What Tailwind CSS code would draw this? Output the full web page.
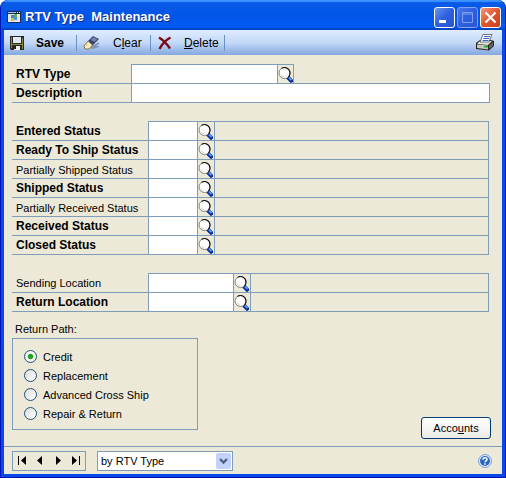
<!DOCTYPE html>
<html lang="en">
<head>
<meta charset="utf-8">
<title>RTV Type Maintenance</title>
<script src="https://cdn.jsdelivr.net/npm/@tailwindcss/browser@4"></script>
</head>
<body class="bg-white font-['Liberation_Sans',Arial,sans-serif] text-[11px] leading-4 text-black">
<svg class="hidden" aria-hidden="true">
  <symbol id="lens" viewBox="0 0 15 17">
    <path d="M10.500 12l2.500 2.500" stroke="#0a2f9c" stroke-width="4" stroke-linecap="square"/>
    <path d="M11 11.500l2.500 2.500" stroke="#5a98f4" stroke-width="1.800"/>
    <circle cx="6.500" cy="7" r="5.500" fill="#fff" stroke="#8a8278" stroke-width="1"/>
    <path d="M3.500 2.400A5.500 5.500 0 0 1 12 7a5.500 5.500 0 0 1-1.500 4" fill="none" stroke="#111" stroke-width="1.100"/>
    <path d="M3 8.500a3.800 3.800 0 0 0 3 2.400" fill="none" stroke="#d8d4cc"/>
  </symbol>
</svg>
<div class="flex min-h-screen flex-col overflow-hidden rounded-t-lg border-x border-b border-[#0014b4] bg-[#0a48e8]">
  <header class="flex h-[30px] items-center bg-linear-to-b from-[#0a5be8] via-[#0255e6] to-[#025cfa] pt-1 pr-1 pl-1.5 shadow-[inset_0_2px_1px_#3c93ff,inset_0_-2px_1px_#0144c4]">
    <svg class="h-3 w-3.5" viewBox="0 0 14 12"><path d="M0 0h14v12H0z" fill="#1b2c56"/><path d="M1 3h12v8H1z" fill="#dfe8ee"/><path d="M1 1h8v1H1z" fill="#a9c0e8"/><path d="M10 1h1v1h-1zM12 1h1v1h-1z" fill="#fff"/><path d="M4 4h3v3H4z" fill="#3f87c8"/><path d="M7 3h3v3H7z" fill="#69a84c"/><path d="M4 7h3v3H4z" fill="#e0b53c"/><path d="M7 6h3v3H7z" fill="#4a94d8"/></svg>
    <h1 class="ml-1 flex-1 text-[13px] font-bold whitespace-pre text-white [text-shadow:1px_1px_#0a2a7c]">RTV Type  Maintenance</h1>
    <div class="flex gap-0.5">
      <button aria-label="Minimize" class="h-[21px] w-[21px] rounded-[3px] border border-white bg-linear-to-br from-[#6d92f0] via-[#2c5fe0] to-[#2a56d4]"><svg viewBox="0 0 19 19"><path d="M4 12h7v3H4z" fill="#fff"/></svg></button>
      <button aria-label="Maximize" disabled class="h-[21px] w-[21px] rounded-[3px] border border-[#7f9ff0] bg-linear-to-br from-[#4a78ea] via-[#2c5fe0] to-[#2a56d4]"><svg viewBox="0 0 19 19"><path d="M4.500 4.500h10v10h-10zM4 6h11" fill="none" stroke="#7f9ff0"/></svg></button>
      <button aria-label="Close" class="h-[21px] w-[21px] rounded-[3px] border border-white bg-linear-to-br from-[#f09a80] via-[#e0552e] to-[#c8401c]"><svg viewBox="0 0 19 19"><path d="M4.500 4.500l10 10M14.500 4.500l-10 10" stroke="#fff" stroke-width="2.200"/></svg></button>
    </div>
  </header>
  <div class="mx-[3px] mb-[3px] flex flex-1 flex-col bg-[#ece9d8]">
  <nav class="flex h-[25px] items-center bg-linear-to-b from-[#dfecfe] via-[#c4d9f8] to-[#84a8e0] pr-2 pl-1.5 text-xs">
    <button class="flex h-4 basis-[66px] items-center gap-3 font-bold"><svg class="h-3.5 w-3.5 shrink-0" viewBox="0 0 14 14"><path d="M0 0h14v14H1L0 13z" fill="#2a2a1c"/><path d="M1 1h1v11H1zM12 2h1v11h-1zM2 8h10v1H2z" fill="#8a8a3c"/><path d="M3 1h8v6H3z" fill="#dfeaf8"/><path d="M4 10h6v4H4z" fill="#eee"/><path d="M4 10h2v3H4z" fill="#222"/></svg><span>Save</span></button>
    <span class="h-4 w-px bg-[#6d8fc4]"></span>
    <button class="flex h-4 basis-[73px] items-center gap-3.5 pl-1.5"><svg class="h-3.5 w-4 shrink-0" viewBox="0 0 16 14"><path d="M6 12l10-6v2l-3 2h3v1l-6 2z" fill="#7f93b8"/><path d="M5 5l5-5 6 3-7 7z" fill="#3a3f68"/><path d="M7.500 4l3-3 4 2-3 3z" fill="#7680b0"/><path d="M1 10l4-5 4.500 4L6 13H2z" fill="#f5edc8" stroke="#8a7848"/><path d="M2.500 10.500L5 7.500" stroke="#e0c878"/></svg><span>C<u>l</u>ear</span></button>
    <span class="h-4 w-px bg-[#6d8fc4]"></span>
    <button class="flex h-4 basis-[73px] items-center gap-3 pl-[7px]"><svg class="h-3.5 w-3.5 shrink-0" viewBox="0 0 14 14"><path d="M1 1.500C5 4 9 8 12 12.500M12.500 1.500C8 4 4 8 1.500 13" fill="none" stroke="#7c0a14" stroke-width="2.400"/></svg><span><u>D</u>elete</span></button>
    <span class="h-4 w-px bg-[#6d8fc4]"></span>
    <button aria-label="Print" class="ml-auto"><svg class="h-[17px] w-[18px]" viewBox="0 0 18 17"><path d="M0 9l4-3h11l3 1v5l-5 4.500L0 15z" fill="#222"/><path d="M1 10l3-3h12l-4 4z" fill="#e4e6dc"/><path d="M1 10.500l11 1v4L1 14z" fill="#c4c8c0"/><path d="M13 11.500l4-3.500v4l-4 3z" fill="#66665e"/><path d="M4 8l3-7.500h9L13 8z" fill="#fff" stroke="#444" stroke-width=".7"/><path d="M8 2.500h6M7.300 4.500h6M6.500 6.500h6" stroke="#3866c8"/><path d="M8 12h4v1.500H8z" fill="#1eb428"/></svg></button>
  </nav>
  <main class="flex flex-1 flex-col pt-[9px] pr-3 pl-2">
    <section>
      <div class="flex h-5 border-b border-[#7f9db9]">
        <label for="type" class="w-[119px] pt-0.5 pl-1 text-xs font-bold">RTV Type</label>
        <input id="type" class="w-[146px] border-t border-l border-[#7f9db9] bg-white px-1 outline-none">
        <button aria-label="Look up RTV type" class="w-[17px] border-x border-t border-[#7f9db9]"><svg class="h-[17px] w-[15px]"><use href="#lens"/></svg></button>
      </div>
      <div class="flex h-[19px] border-b border-[#7f9db9]">
        <label for="desc" class="w-[119px] pt-px pl-1 text-xs font-bold">Description</label>
        <input id="desc" class="min-w-0 flex-1 border-x border-[#7f9db9] bg-white px-1 outline-none">
      </div>
    </section>
    <section class="mt-[18px] mr-px">
      <div class="flex h-5 border-b border-[#7f9db9]">
        <label for="s1" class="w-[136px] pt-0.5 pl-1 text-xs font-bold whitespace-nowrap">Entered Status</label>
        <input id="s1" class="w-[49px] border-t border-l border-[#7f9db9] bg-white px-1 outline-none">
        <button aria-label="Look up entered status" class="w-[17px] border-t border-l border-[#7f9db9]"><svg class="h-[17px] w-[15px]"><use href="#lens"/></svg></button>
        <output class="flex-1 border-x border-t border-[#7f9db9]"></output>
      </div>
      <div class="flex h-[19px] border-b border-[#7f9db9]">
        <label for="s2" class="w-[136px] pt-px pl-1 text-xs font-bold whitespace-nowrap">Ready To Ship Status</label>
        <input id="s2" class="w-[49px] border-l border-[#7f9db9] bg-white px-1 outline-none">
        <button aria-label="Look up ready to ship status" class="w-[17px] border-l border-[#7f9db9]"><svg class="h-[17px] w-[15px]"><use href="#lens"/></svg></button>
        <output class="flex-1 border-x border-[#7f9db9]"></output>
      </div>
      <div class="flex h-[19px] border-b border-[#7f9db9]">
        <label for="s3" class="w-[136px] pt-0.5 pl-1 whitespace-nowrap">Partially Shipped Status</label>
        <input id="s3" class="w-[49px] border-l border-[#7f9db9] bg-white px-1 outline-none">
        <button aria-label="Look up partially shipped status" class="w-[17px] border-l border-[#7f9db9]"><svg class="h-[17px] w-[15px]"><use href="#lens"/></svg></button>
        <output class="flex-1 border-x border-[#7f9db9]"></output>
      </div>
      <div class="flex h-[19px] border-b border-[#7f9db9]">
        <label for="s4" class="w-[136px] pt-px pl-1 text-xs font-bold whitespace-nowrap">Shipped Status</label>
        <input id="s4" class="w-[49px] border-l border-[#7f9db9] bg-white px-1 outline-none">
        <button aria-label="Look up shipped status" class="w-[17px] border-l border-[#7f9db9]"><svg class="h-[17px] w-[15px]"><use href="#lens"/></svg></button>
        <output class="flex-1 border-x border-[#7f9db9]"></output>
      </div>
      <div class="flex h-[19px] border-b border-[#7f9db9]">
        <label for="s5" class="w-[136px] pt-0.5 pl-1 whitespace-nowrap">Partially Received Status</label>
        <input id="s5" class="w-[49px] border-l border-[#7f9db9] bg-white px-1 outline-none">
        <button aria-label="Look up partially received status" class="w-[17px] border-l border-[#7f9db9]"><svg class="h-[17px] w-[15px]"><use href="#lens"/></svg></button>
        <output class="flex-1 border-x border-[#7f9db9]"></output>
      </div>
      <div class="flex h-[19px] border-b border-[#7f9db9]">
        <label for="s6" class="w-[136px] pt-px pl-1 text-xs font-bold whitespace-nowrap">Received Status</label>
        <input id="s6" class="w-[49px] border-l border-[#7f9db9] bg-white px-1 outline-none">
        <button aria-label="Look up received status" class="w-[17px] border-l border-[#7f9db9]"><svg class="h-[17px] w-[15px]"><use href="#lens"/></svg></button>
        <output class="flex-1 border-x border-[#7f9db9]"></output>
      </div>
      <div class="flex h-[19px] border-b border-[#7f9db9]">
        <label for="s7" class="w-[136px] pt-px pl-1 text-xs font-bold whitespace-nowrap">Closed Status</label>
        <input id="s7" class="w-[49px] border-l border-[#7f9db9] bg-white px-1 outline-none">
        <button aria-label="Look up closed status" class="w-[17px] border-l border-[#7f9db9]"><svg class="h-[17px] w-[15px]"><use href="#lens"/></svg></button>
        <output class="flex-1 border-x border-[#7f9db9]"></output>
      </div>
    </section>
    <section class="mt-[18px] mr-px">
      <div class="flex h-5 border-b border-[#7f9db9]">
        <label for="l1" class="w-[136px] pt-0.5 pl-1 whitespace-nowrap">Sending Location</label>
        <input id="l1" class="w-[85px] border-t border-l border-[#7f9db9] bg-white px-1 outline-none">
        <button aria-label="Look up sending location" class="w-[17px] border-t border-l border-[#7f9db9]"><svg class="h-[17px] w-[15px]"><use href="#lens"/></svg></button>
        <output class="flex-1 border-x border-t border-[#7f9db9]"></output>
      </div>
      <div class="flex h-[19px] border-b border-[#7f9db9]">
        <label for="l2" class="w-[136px] pt-px pl-1 text-xs font-bold whitespace-nowrap">Return Location</label>
        <input id="l2" class="w-[85px] border-l border-[#7f9db9] bg-white px-1 outline-none">
        <button aria-label="Look up return location" class="w-[17px] border-l border-[#7f9db9]"><svg class="h-[17px] w-[15px]"><use href="#lens"/></svg></button>
        <output class="flex-1 border-x border-[#7f9db9]"></output>
      </div>
    </section>
    <div class="mt-[9px] flex flex-1 justify-between pb-[7px]">
      <div role="radiogroup" aria-labelledby="path">
        <div id="path" class="h-[17px] pl-[3px]">Return Path:</div>
        <div class="w-[186px] border border-[#7f9db9] px-[11px] pt-2 pb-1.5">
          <label class="flex h-[19px] items-center gap-1.5"><input type="radio" name="path" checked class="h-[13px] w-[13px] appearance-none rounded-full border border-[#1c5180] bg-[radial-gradient(circle,#21a121_30%,#f4f4f0_40%)]">Credit</label>
          <label class="flex h-[19px] items-center gap-1.5"><input type="radio" name="path" class="h-[13px] w-[13px] appearance-none rounded-full border border-[#1c5180] bg-linear-to-br from-[#dcdcd7] to-white">Replacement</label>
          <label class="flex h-[19px] items-center gap-1.5"><input type="radio" name="path" class="h-[13px] w-[13px] appearance-none rounded-full border border-[#1c5180] bg-linear-to-br from-[#dcdcd7] to-white">Advanced Cross Ship</label>
          <label class="flex h-[19px] items-center gap-1.5"><input type="radio" name="path" class="h-[13px] w-[13px] appearance-none rounded-full border border-[#1c5180] bg-linear-to-br from-[#dcdcd7] to-white">Repair &amp; Return</label>
        </div>
      </div>
      <button class="-mr-px h-[22px] w-[70px] self-end rounded-[3px] border border-[#003c74] bg-linear-to-b from-white to-[#ecebe5]">Acco<u>u</u>nts</button>
    </div>
  </main>
  <footer class="flex h-7 items-center border-t border-[#7f9db9] pr-2.5 pl-2">
    <div class="flex h-5 w-[74px] items-center justify-between border border-[#7f9db9] px-1">
      <button aria-label="First"><svg class="h-[9px] w-2.5" viewBox="0 0 10 9"><path d="M1 0h1v9H1zM9 0v9L4 4.500z"/></svg></button>
      <button aria-label="Previous"><svg class="h-[9px] w-2.5" viewBox="0 0 10 9"><path d="M7 0v9L2 4.500z"/></svg></button>
      <button aria-label="Next"><svg class="h-[9px] w-2.5" viewBox="0 0 10 9"><path d="M3 0v9l5-4.500z"/></svg></button>
      <button aria-label="Last"><svg class="h-[9px] w-2.5" viewBox="0 0 10 9"><path d="M8 0h1v9H8zM1 0v9l5-4.500z"/></svg></button>
    </div>
    <div class="relative ml-[11px]">
      <select aria-label="Sort order" class="block h-5 w-[136px] appearance-none border border-[#7f9db9] bg-white pl-[3px] leading-4"><option>by RTV Type</option></select>
      <svg class="pointer-events-none absolute top-0.5 right-0.5 h-4 w-[15px]" viewBox="0 0 15 16"><rect width="15" height="16" rx="2" fill="#c1d3fb"/><path d="M4 6l3.500 3.500L11 6" fill="none" stroke="#4d6185" stroke-width="2.400"/></svg>
    </div>
    <button aria-label="Help" class="ml-auto"><svg class="block h-3.5 w-3.5" viewBox="0 0 14 14"><circle cx="7" cy="7" r="6.400" fill="#f4f8ff" stroke="#6d96d4"/><circle cx="7" cy="7" r="5" fill="#2a66c0"/><path d="M5 5.700C5 3.200 9 3.300 9 5.400 9 6.800 7 6.800 7 8.300M7 9.300v1.400" fill="none" stroke="#fff" stroke-width="1.500"/></svg></button>
  </footer>
  </div>
</div>
</body>
</html>
